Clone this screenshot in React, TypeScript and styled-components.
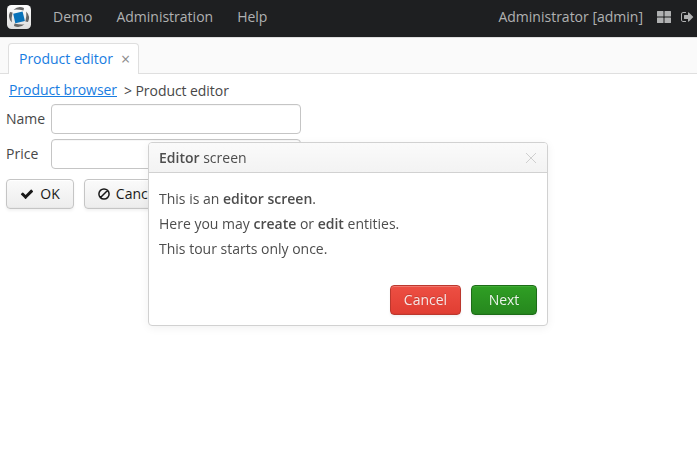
import React from 'react';
import styled, { createGlobalStyle, css } from 'styled-components';

const GlobalStyle = createGlobalStyle`
  * { box-sizing: border-box; }
  html, body { margin: 0; height: 100%; overflow: hidden; background: #fff; }
  body { font: 400 14px/20px "Open Sans", sans-serif; color: #474747; }
  button, input { font: inherit; }
`;

const Screen = styled.div`
  position: relative;
  height: 468px;
  overflow: hidden;
`;

const TopBar = styled.header`
  display: flex;
  align-items: center;
  height: 37px;
  padding: 0 3px 4px 7px;
  background: #1e1f21;
  color: #b0b1b2;
`;

const Logo = styled.svg`
  width: 24px;
  height: 24px;
  margin-right: 22px;
`;

const Menu = styled.nav`
  display: flex;
  flex: 1;
  gap: 24px;
`;

const MenuItem = styled.span`
  white-space: nowrap;
`;

const UserName = styled.span`
  margin-right: 14px;
`;

const Glyph = styled.svg<{ $size: number; $gap?: number }>`
  flex: none;
  width: ${(p) => p.$size}px;
  height: ${(p) => p.$size}px;
  margin-right: ${(p) => p.$gap ?? 0}px;
  fill: currentColor;
`;

const TabStrip = styled.div`
  display: flex;
  align-items: flex-end;
  height: 37px;
  padding-left: 8px;
  background: #fafafa;
  border-top: 1px solid #dfdfdf;
  border-bottom: 1px solid #dfdfdf;
`;

const Tab = styled.div`
  display: flex;
  height: 31px;
  width: 131px;
  margin-bottom: -1px;
  padding: 5px 0 0 10px;
  border: 1px solid #dfdfdf;
  border-bottom: 0;
  border-radius: 4px 4px 0 0;
  background: #fff;
  color: #197de1;
  letter-spacing: -0.02px;
`;

const TabClose = styled.span`
  margin-left: 8px;
  color: #8c8c8c;
  font-size: 16px;
`;

const Breadcrumbs = styled.div`
  display: flex;
  gap: 7px;
  height: 30px;
  padding: 7px 9px 0;
  letter-spacing: -0.06px;
`;

const CrumbLink = styled.a`
  height: 16px;
  line-height: 18px;
  border-bottom: 1px solid #197de1;
  color: #197de1;
`;

const Form = styled.div`
  display: grid;
  grid-template-columns: 45px 250px;
  row-gap: 5px;
  padding-left: 6px;
  align-items: center;
`;

const Field = styled.input`
  width: 250px;
  height: 30px;
  padding: 0 6px;
  border: 1px solid #c5c5c5;
  border-radius: 4px;
  background: #fff;
  box-shadow: inset 0 1px 0 #f7f7f7;
`;

const Actions = styled.div`
  display: flex;
  gap: 10px;
  padding: 10px 6px;
`;

const tones = {
  plain: css`
    color: #191919;
    border-color: #c5c5c5;
    background: linear-gradient(#fafafa 2%, #ededed 98%);
    box-shadow: inset 0 1px 0 #fff, inset 0 -1px 0 #e8e8e8, 0 2px 3px rgba(0, 0, 0, 0.05);
  `,
  danger: css`
    color: #f6e6e5;
    border-color: #bb382e;
    background: linear-gradient(#ed4f43 2%, #e13e33 98%);
    box-shadow: inset 0 1px 0 #f1786f, inset 0 -1px 0 #da3c31, 0 2px 3px rgba(0, 0, 0, 0.05);
    text-shadow: 0 -1px 0 rgba(0, 0, 0, 0.15);
  `,
  friendly: css`
    color: #eaf4e9;
    border-color: #1d6c18;
    background: linear-gradient(#2f9e24 2%, #26881e 98%);
    box-shadow: inset 0 1px 0 #41ac36, inset 0 -1px 0 #25831d, 0 2px 3px rgba(0, 0, 0, 0.05);
    text-shadow: 0 -1px 0 rgba(0, 0, 0, 0.15);
  `,
};

const Button = styled.button<{ $tone: keyof typeof tones; $width: number }>`
  display: flex;
  align-items: center;
  justify-content: center;
  width: ${(p) => p.$width}px;
  height: 30px;
  padding: 0;
  border: 1px solid;
  border-radius: 4px;
  ${(p) => tones[p.$tone]}
`;

const Dialog = styled.section`
  position: absolute;
  left: 148px;
  top: 142px;
  display: flex;
  flex-direction: column;
  width: 400px;
  height: 184px;
  border: 1px solid #d1d1d1;
  border-radius: 4px;
  background: #fff;
  color: #4d4d4d;
  box-shadow: 0 2px 10px rgba(0, 0, 0, 0.06);
  will-change: transform;

  b { font-weight: 600; }
`;

const DialogHeader = styled.header`
  display: flex;
  align-items: center;
  justify-content: space-between;
  height: 30px;
  padding: 0 11px 0 10px;
  border-bottom: 1px solid #d1d1d1;
  border-radius: 3px 3px 0 0;
  background: linear-gradient(#fafafa, #f3f3f3);
`;

const CloseMark = styled.svg`
  width: 10px;
  height: 10px;
  fill: none;
  stroke: #cfcfcf;
`;

const DialogBody = styled.div`
  flex: 1;
  padding: 13px 10px 0;
  line-height: 25px;
`;

const DialogFooter = styled.footer`
  display: flex;
  justify-content: flex-end;
  gap: 10px;
  padding: 0 10px 10px;
`;

const BrandLogo = () => (
  <Logo viewBox="0 0 24 24">
    <defs>
      <linearGradient id="plate" x2="0" y2="1">
        <stop stopColor="#fff" />
        <stop offset="1" stopColor="#dedede" />
      </linearGradient>
    </defs>
    <rect width="24" height="24" rx="4.5" fill="url(#plate)" />
    <g fill="#666">
      <path d="M6.500 4.800Q11.500 .2 17 3L16.500 5.600Q11 4.200 6.500 4.800Z" />
      <path d="M19.200 6.500Q23.800 11.500 21 17L18.400 16.500Q19.800 11 19.200 6.500Z" />
      <path d="M17.500 19.200Q12.500 23.800 7 21L7.500 18.400Q13 19.800 17.500 19.200Z" />
      <path d="M4.800 17.500Q.2 12.500 3 7L5.600 7.500Q4.200 13 4.800 17.500Z" />
    </g>
    <path d="M6.200 8.700L15.600 6.600L17.900 16L8.300 18.200Z" fill="#0872b9" />
  </Logo>
);

const GridIcon = () => (
  <Glyph viewBox="0 0 14 14" $size={14} $gap={9}>
    <path d="M.5 1H6q.5 0 .5.5V6q0 .5-.5.5H.5Q0 6.500 0 6V1.500Q0 1 .5 1ZM8 1h5.500q.5 0 .5.5V6q0 .5-.5.5H8q-.5 0-.5-.5V1.500Q7.500 1 8 1ZM.5 7.500H6q.5 0 .5.5v4.500q0 .5-.5.5H.5q-.5 0-.5-.5V8q0-.5.5-.5ZM8 7.500h5.500q.5 0 .5.5v4.500q0 .5-.5.5H8q-.5 0-.5-.5V8q0-.5.5-.5Z" />
  </Glyph>
);

const SignOutIcon = () => (
  <Glyph viewBox="0 0 1664 1792" $size={14}>
    <path d="M704 1440q0 4 1 20t.5 26.500-3 23.500-10 19.500-20.500 6.500h-320q-119 0-203.500-84.500t-84.500-203.500v-704q0-119 84.500-203.500t203.500-84.500h320q13 0 22.500 9.500t9.500 22.500q0 4 1 20t.5 26.500-3 23.500-10 19.500-20.500 6.500h-320q-66 0-113 47t-47 113v704q0 66 47 113t113 47h312l11.500 1 11.500 3 8 5.500 7 9 2 13.500zm928-544q0 26-19 45l-544 544q-19 19-45 19t-45-19-19-45v-288h-448q-26 0-45-19t-19-45v-384q0-26 19-45t45-19h448v-288q0-26 19-45t45-19 45 19l544 544q19 19 19 45z" />
  </Glyph>
);

const CheckIcon = () => (
  <Glyph viewBox="0 0 1792 1792" $size={14} $gap={6}>
    <path d="M1671 566q0 40-28 68l-724 724-136 136q-28 28-68 28t-68-28l-136-136-362-362q-28-28-28-68t28-68l136-136q28-28 68-28t68 28l294 295 656-657q28-28 68-28t68 28l136 136q28 28 28 68z" />
  </Glyph>
);

const BanIcon = () => (
  <Glyph viewBox="0 0 12 12" $size={12} $gap={6}>
    <path
      d="M11.100 6A5.100 5.100 0 1 1 .9 6A5.100 5.100 0 1 1 11.100 6M2.500 9.500L9.500 2.500"
      fill="none"
      stroke="currentColor"
      strokeWidth="1.500"
    />
  </Glyph>
);

export default function App() {
  return (
    <Screen>
      <GlobalStyle />
      <TopBar>
        <BrandLogo />
        <Menu>
          <MenuItem>Demo</MenuItem>
          <MenuItem>Administration</MenuItem>
          <MenuItem>Help</MenuItem>
        </Menu>
        <UserName>Administrator [admin]</UserName>
        <GridIcon />
        <SignOutIcon />
      </TopBar>
      <TabStrip>
        <Tab>
          Product editor
          <TabClose>×</TabClose>
        </Tab>
      </TabStrip>
      <Breadcrumbs>
        <CrumbLink>Product browser</CrumbLink>
        <span>&gt; Product editor</span>
      </Breadcrumbs>
      <Form>
        <label htmlFor="name">Name</label>
        <Field id="name" />
        <label htmlFor="price">Price</label>
        <Field id="price" />
      </Form>
      <Actions>
        <Button $tone="plain" $width={68}>
          <CheckIcon />
          OK
        </Button>
        <Button $tone="plain" $width={89}>
          <BanIcon />
          Cancel
        </Button>
      </Actions>
      <Dialog role="dialog">
        <DialogHeader>
          <span>
            <b>Editor</b> screen
          </span>
          <CloseMark viewBox="0 0 10 10">
            <path d="M0 0L10 10M10 0L0 10" />
          </CloseMark>
        </DialogHeader>
        <DialogBody>
          <div>
            This is an <b>editor screen</b>.
          </div>
          <div>
            Here you may <b>create</b> or <b>edit</b> entities.
          </div>
          <div>This tour starts only once.</div>
        </DialogBody>
        <DialogFooter>
          <Button $tone="danger" $width={71}>
            Cancel
          </Button>
          <Button $tone="friendly" $width={66}>
            Next
          </Button>
        </DialogFooter>
      </Dialog>
    </Screen>
  );
}
